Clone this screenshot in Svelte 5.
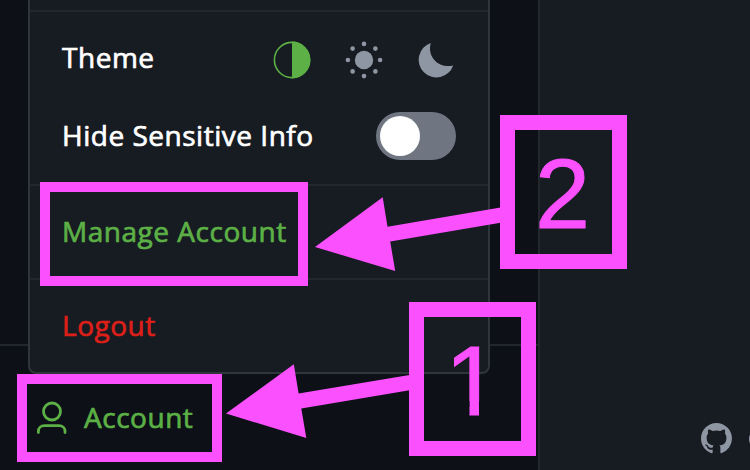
<script>
  const dots = Array.from({ length: 8 }, (_, i) => {
    const angle = (i * Math.PI) / 4;
    return { x: 20 + 16.1 * Math.cos(angle), y: 20 + 16.1 * Math.sin(angle) };
  });
</script>

<div class="app">
  <aside>
    <div class="nav"></div>
    <div class="account">
      <svg width="32" height="34" viewBox="0 0 32 34" fill="none" stroke="currentColor" stroke-width="2.8">
        <circle cx="16" cy="10.5" r="8.5" />
        <path d="M2.4 31.500v-1.200c0-3.400 2.500-5.600 6-5.600h14.600c3.500 0 6 2.200 6 5.600v1.200" stroke-linecap="round" />
      </svg>
      <span>Account</span>
    </div>
  </aside>

  <main>
    <footer>
      <svg width="31" height="31" viewBox="0 0 16 16" fill="currentColor">
        <path d="M8 0C3.58 0 0 3.58 0 8c0 3.54 2.29 6.53 5.47 7.59.4.07.55-.17.55-.38 0-.19-.01-.82-.01-1.49-2.01.37-2.53-.49-2.69-.94-.09-.23-.48-.94-.82-1.13-.28-.15-.68-.52-.01-.53.63-.01 1.080.58 1.230.82.72 1.210 1.870.87 2.330.66.07-.52.28-.87.51-1.070-1.780-.2-3.640-.89-3.640-3.950 0-.87.31-1.590.82-2.150-.08-.2-.36-1.020.08-2.120 0 0 .67-.21 2.200.82.64-.18 1.320-.27 2-.27s1.360.09 2 .27c1.530-1.040 2.200-.82 2.200-.82.44 1.100.16 1.920.08 2.120.51.56.82 1.270.82 2.150 0 3.070-1.870 3.750-3.650 3.950.29.25.54.73.54 1.480 0 1.070-.01 1.930-.01 2.200 0 .21.15.46.55.38A8 8 0 0 0 16 8c0-4.420-3.580-8-8-8z" />
      </svg>
      <i></i>
    </footer>
  </main>

  <div class="menu">
    <section class="top"></section>
    <section class="settings">
      <div class="row theme">
        <span>Theme</span>
        <div class="icons">
          <svg class="active" width="40" height="40" viewBox="0 0 40 40">
            <circle cx="20" cy="20" r="17.6" fill="none" stroke="currentColor" stroke-width="1.6" />
            <path d="M20 1.600a18.400 18.400 0 0 1 0 36.800z" fill="currentColor" />
          </svg>
          <svg width="40" height="40" viewBox="0 0 40 40" fill="currentColor">
            <circle cx="20" cy="20" r="9.2" />
            {#each dots as dot}
              <circle cx={dot.x} cy={dot.y} r="2.3" />
            {/each}
          </svg>
          <svg width="40" height="40" viewBox="0 0 40 40" fill="currentColor">
            <path d="M14.800 3C13.100 8.500 13.900 15 18.300 20C23 25.400 30 27.300 37.200 25.400A17.700 17.700 0 1 1 14.800 3z" />
          </svg>
        </div>
      </div>
      <div class="row">
        <span>Hide Sensitive Info</span>
        <div class="toggle"><i></i></div>
      </div>
    </section>
    <section class="item manage">Manage Account</section>
    <section class="item logout">Logout</section>
  </div>

  <div class="mark manage-mark"></div>
  <div class="mark account-mark"></div>
  <svg class="arrows" width="750" height="470" viewBox="0 0 750 470" fill="#fb50fd">
    <path d="M315 247L382.700 197.300L387.500 226.800L502 207.300V222.500L390.200 241.500L395.200 271Z" />
    <path d="M226 413.600L293.800 364.200L298.600 393.600L411 374.800V390.100L301.300 408.600L306.300 438Z" />
  </svg>
  <div class="mark step two"><span>2</span></div>
  <div class="mark step one"><span>1</span></div>
</div>

<style>
  :global(body) { margin: 0; background: #171b22; }
  .app {
    position: relative;
    display: flex;
    width: 750px;
    height: 470px;
    overflow: hidden;
    background: #171b22;
    color: #fff;
    font: 500 28px/38px "Open Sans", "Noto Sans", sans-serif;
    letter-spacing: 0.52px;
    -webkit-text-stroke: 0.7px currentColor;
  }
  svg { display: block; flex: none; }
  aside {
    box-sizing: border-box;
    flex: none;
    width: 540px;
    display: flex;
    flex-direction: column;
    background: #0d1017;
    border-right: 2px solid #22262d;
  }
  .nav { height: 344px; border-bottom: 2px solid #22262d; }
  .account {
    display: flex;
    gap: 16px;
    padding: 52px 0 0 36px;
    color: #5cb046;
  }
  .account svg { margin-top: 3px; }
  main { flex: 1; min-width: 0; display: flex; align-items: flex-end; }
  footer {
    display: flex;
    align-items: center;
    gap: 17px;
    padding: 0 0 16px 161px;
    color: #8f96a3;
  }
  footer i { width: 20px; height: 20px; flex: none; border-radius: 50%; background: currentColor; }
  .menu {
    position: absolute;
    left: 28px;
    top: -10px;
    box-sizing: border-box;
    width: 462px;
    height: 384px;
    display: flex;
    flex-direction: column;
    background: #171b22;
    border: 2px solid #30343c;
    border-radius: 8px;
  }
  .menu section + section { border-top: 2px solid #22262d; }
  .top { height: 18px; }
  .settings {
    height: 172px;
    box-sizing: content-box;
    display: flex;
    flex-direction: column;
    gap: 28px;
  }
  .row {
    display: flex;
    align-items: center;
    justify-content: space-between;
    height: 48px;
    padding: 0 32px;
  }
  .row > span { padding-bottom: 2px; }
  .theme { margin-top: 24px; }
  .theme > span { padding-bottom: 6px; }
  .icons { display: flex; gap: 32px; color: #8f96a3; }
  .active { color: #5cb046; }
  .toggle {
    display: flex;
    box-sizing: border-box;
    width: 80px;
    height: 48px;
    padding: 4px;
    border-radius: 24px;
    background: #6f7682;
  }
  .toggle i { width: 40px; height: 40px; border-radius: 50%; background: #fff; }
  .item {
    box-sizing: border-box;
    height: 94px;
    padding: 26px 32px;
  }
  .manage { color: #5cb046; -webkit-text-stroke-color: #5cb046; }
  .account { -webkit-text-stroke-color: #5cb046; }
  .logout { color: #dc2019; -webkit-text-stroke-color: #dc2019; }
  .mark { position: absolute; box-sizing: border-box; border: 10px solid #fb50fd; }
  .manage-mark { left: 40px; top: 182px; width: 268px; height: 104px; }
  .account-mark { left: 17px; top: 374px; width: 205px; height: 88px; }
  .arrows { position: absolute; left: 0; top: 0; }
  .step {
    width: 127px;
    height: 154px;
    border-width: 15px;
    color: #fb50fd;
    font: 400 99px/127px "Liberation Sans", Arial, sans-serif;
    letter-spacing: 0;
    text-align: center;
    -webkit-text-stroke: 1px #fb50fd;
  }
  .step span { display: block; }
  .two { left: 500px; top: 115px; }
  .two span { margin-left: -2px; }
  .one { left: 409px; top: 302px; }
  /* Trims the foot of the numeral down to its stem. */
  .one span { clip-path: polygon(0 0, 97px 0, 97px 84px, 55px 84px, 55px 127px, 45.5px 127px, 45.5px 84px, 0 84px); }
</style>
